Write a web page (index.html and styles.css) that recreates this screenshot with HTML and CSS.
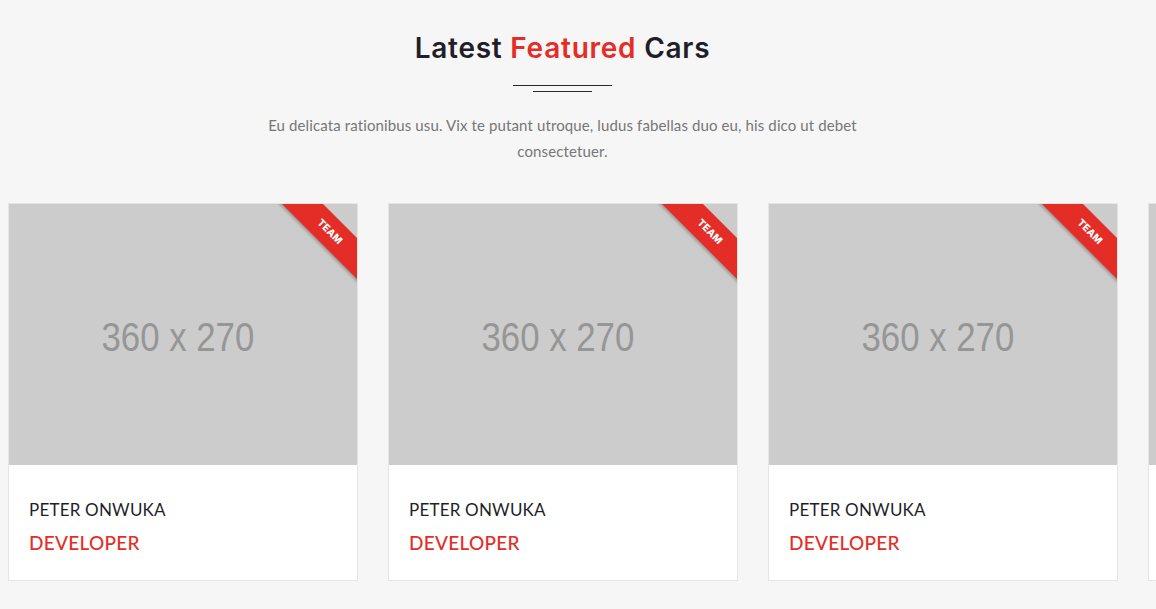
FILE: index.html
```html
<!DOCTYPE html>
<html lang="en">
<head>
<meta charset="utf-8">
<title>Latest Featured Cars</title>
<link rel="stylesheet" href="styles.css">
</head>
<body>
<section class="featured">
  <header class="section-head">
    <h2 class="section-title">Latest <span class="accent">Featured</span> Cars</h2>
    <div class="divider">
      <span class="divider-long"></span>
      <span class="divider-short"></span>
    </div>
    <p class="section-text">Eu delicata rationibus usu. Vix te putant utroque, ludus fabellas duo eu, his dico ut debet consectetuer.</p>
  </header>
  <div class="cards">
    <article class="card">
      <div class="card-img"><span>360 x 270</span></div>
      <div class="ribbon">TEAM</div>
      <div class="card-body">
        <h3 class="card-name">PETER ONWUKA</h3>
        <p class="card-role">DEVELOPER</p>
      </div>
    </article>
    <article class="card">
      <div class="card-img"><span>360 x 270</span></div>
      <div class="ribbon">TEAM</div>
      <div class="card-body">
        <h3 class="card-name">PETER ONWUKA</h3>
        <p class="card-role">DEVELOPER</p>
      </div>
    </article>
    <article class="card">
      <div class="card-img"><span>360 x 270</span></div>
      <div class="ribbon">TEAM</div>
      <div class="card-body">
        <h3 class="card-name">PETER ONWUKA</h3>
        <p class="card-role">DEVELOPER</p>
      </div>
    </article>
    <article class="card">
      <div class="card-img"><span>360 x 270</span></div>
      <div class="ribbon">TEAM</div>
      <div class="card-body">
        <h3 class="card-name">PETER ONWUKA</h3>
        <p class="card-role">DEVELOPER</p>
      </div>
    </article>
  </div>
</section>
</body>
</html>
```
FILE: styles.css
```css
* { box-sizing: border-box; }
html, body { margin: 0; padding: 0; }
body {
  background: #f6f6f6;
  width: 1156px;
  height: 609px;
  overflow: hidden;
  font-family: "Lato", "Open Sans", sans-serif;
}
.featured { padding-top: 28px; }
.section-head {
  width: 1125px;
  text-align: center;
}
.section-title {
  margin: 0;
  font-family: "Inter", "Noto Sans", sans-serif;
  font-weight: 600;
  font-size: 28px;
  line-height: 40px;
  letter-spacing: 0.75px;
  color: #1f1f29;
}
.accent { color: #e52d27; }
.divider {
  margin-top: 17px;
  display: flex;
  flex-direction: column;
  align-items: center;
  gap: 5px;
}
.divider-long { display: block; width: 99px; height: 1px; background: #2a2a2a; }
.divider-short { display: block; width: 59px; height: 1px; background: #2a2a2a; }
.section-text {
  margin: 20px auto 0;
  width: 620px;
  font-size: 15px;
  line-height: 26px;
  letter-spacing: 0.12px;
  color: #777777;
}
.cards {
  margin-top: 39px;
  padding-left: 8px;
  display: flex;
  gap: 30px;
  overflow: hidden;
}
.card {
  position: relative;
  flex: 0 0 350px;
  width: 350px;
  background: #ffffff;
  border: 1px solid #e6e5df;
  overflow: hidden;
}
.card-img {
  height: 261px;
  background: #cccccc;
  display: flex;
  align-items: center;
  justify-content: center;
}
.card-img span {
  font-family: "Liberation Sans", Arial, sans-serif;
  font-size: 40px;
  color: #969696;
  margin-top: 6px;
  margin-right: 10px;
  transform: scaleX(0.87);
}
.ribbon {
  position: absolute;
  top: 13px;
  right: -43px;
  width: 140px;
  height: 29px;
  line-height: 29px;
  background: #e52d27;
  color: #ffffff;
  text-align: center;
  font-family: "Inter", sans-serif;
  font-weight: 800;
  font-size: 10px;
  letter-spacing: 0.1px;
  transform: rotate(45deg);
  box-shadow: 0 2px 3px rgba(0, 0, 0, 0.25);
}
.card-body {
  padding: 33px 20px 24px;
  height: 115px;
}
.card-name {
  margin: 0;
  font-size: 17px;
  line-height: 24px;
  font-weight: 400;
  color: #1f1f29;
  letter-spacing: 0.2px;
}
.card-role {
  margin: 8px 0 0;
  font-size: 19px;
  line-height: 26px;
  font-weight: 500;
  color: #e52d27;
  letter-spacing: 0.3px;
}
```
